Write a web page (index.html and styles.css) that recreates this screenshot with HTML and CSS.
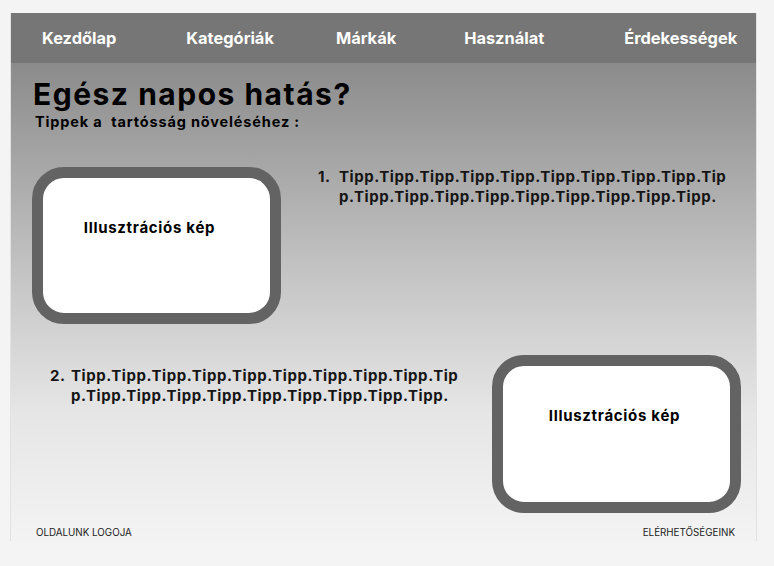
FILE: index.html
```html
<!DOCTYPE html>
<html lang="hu">
<head>
  <meta charset="UTF-8" />
  <meta name="viewport" content="width=device-width, initial-scale=1.0" />
  <title>Egész napos hatás?</title>
  <link rel="stylesheet" href="styles.css">
</head>
<body>
  <div class="page">
    <!-- Menu -->
    <nav class="menu">
      <a href="#">Kezdőlap</a>
      <a href="#">Kategóriák</a>
      <a href="#">Márkák</a>
      <a href="#">Használat</a>
      <a href="#">Érdekességek</a>
    </nav>

    <main class="content">
      <h1 class="title">Egész napos hatás?</h1>
      <p class="subtitle">Tippek a&nbsp; tartósság növeléséhez :</p>

      <div class="row row-first">
        <div class="picture">Illusztrációs kép</div>
        <div class="tip">
          <span class="tip-num">1.</span>
          <p class="tip-text">Tipp.Tipp.Tipp.Tipp.Tipp.Tipp.Tipp.Tipp.Tipp.Tipp.Tipp.Tipp.Tipp.Tipp.Tipp.Tipp.Tipp.Tipp.Tipp.</p>
        </div>
      </div>

      <div class="row row-second">
        <div class="tip">
          <span class="tip-num">2.</span>
          <p class="tip-text">Tipp.Tipp.Tipp.Tipp.Tipp.Tipp.Tipp.Tipp.Tipp.Tipp.Tipp.Tipp.Tipp.Tipp.Tipp.Tipp.Tipp.Tipp.Tipp.</p>
        </div>
        <div class="picture">Illusztrációs kép</div>
      </div>
    </main>

    <footer class="footer">
      <span>OLDALUNK LOGOJA</span>
      <span>ELÉRHETŐSÉGEINK</span>
    </footer>
  </div>
</body>
</html>
```

FILE: styles.css
```css
* { box-sizing: border-box; }

body {
  margin: 0;
  padding: 13px 0 0 10px;
  background-color: #f4f4f4;
  font-family: 'Inter', 'Noto Sans', sans-serif;
  color: #111;
}

.page {
  width: 747px;
  height: 528px;
  display: flex;
  flex-direction: column;
  border-left: 1px solid #e2e2e2;
  border-right: 1px solid #e2e2e2;
  background: linear-gradient(to bottom, #777 0, #777 50px, #8b8b8b 50px, #c4c4c4 260px, #e6e6e6 400px, #f3f3f3 528px);
}

.menu {
  height: 50px;
  display: flex;
  align-items: center;
  padding: 0 0 0 31px;
  background-color: #767676;
}

.menu a {
  color: #fff;
  font-weight: 700;
  font-size: 16.4px;
  text-decoration: none;
}

.menu a:nth-child(2) { margin-left: 70px; }
.menu a:nth-child(3) { margin-left: 62px; }
.menu a:nth-child(4) { margin-left: 68px; }
.menu a:nth-child(5) { margin-left: 80px; }

.content {
  flex: 1;
  padding: 17px 15px 0 21px;
}

.title {
  margin: 0 0 0 1px;
  font-size: 30px;
  line-height: 30px;
  letter-spacing: 1.5px;
  font-weight: 700;
  color: #000;
}

.subtitle {
  margin: 5px 0 0 3px;
  font-size: 14.5px;
  line-height: 16px;
  letter-spacing: 0.85px;
  font-weight: 700;
  color: #000;
}

.row {
  display: flex;
  align-items: flex-start;
}

.row-first {
  margin-top: 37px;
  gap: 37px;
}

.row-second {
  margin-top: 31px;
  padding-left: 18px;
  justify-content: space-between;
}

.picture {
  width: 249px;
  height: 157px;
  flex-shrink: 0;
  padding: 40px 0 0;
  border: 11px solid #636363;
  border-radius: 32px;
  background-color: #fff;
  text-align: center;
  font-weight: 700;
  font-size: 15px;
  letter-spacing: 0.7px;
  color: #000;
}

.row-first .picture {
  padding-right: 14px;
}

.row-second .picture {
  height: 158px;
  padding-right: 4px;
}

.tip {
  display: flex;
  font-weight: 700;
  font-size: 15px;
  line-height: 20px;
  letter-spacing: 0.55px;
  color: #151515;
}

.row-second .tip {
  margin-top: 11px;
}

.tip-num {
  width: 21px;
  flex-shrink: 0;
}

.tip-text {
  margin: 0;
  width: 391px;
  word-break: break-all;
}

.footer {
  height: 28px;
  display: flex;
  justify-content: space-between;
  align-items: flex-end;
  padding: 0 21px 3px 25px;
  font-size: 9.8px;
  color: #222;
}
```
